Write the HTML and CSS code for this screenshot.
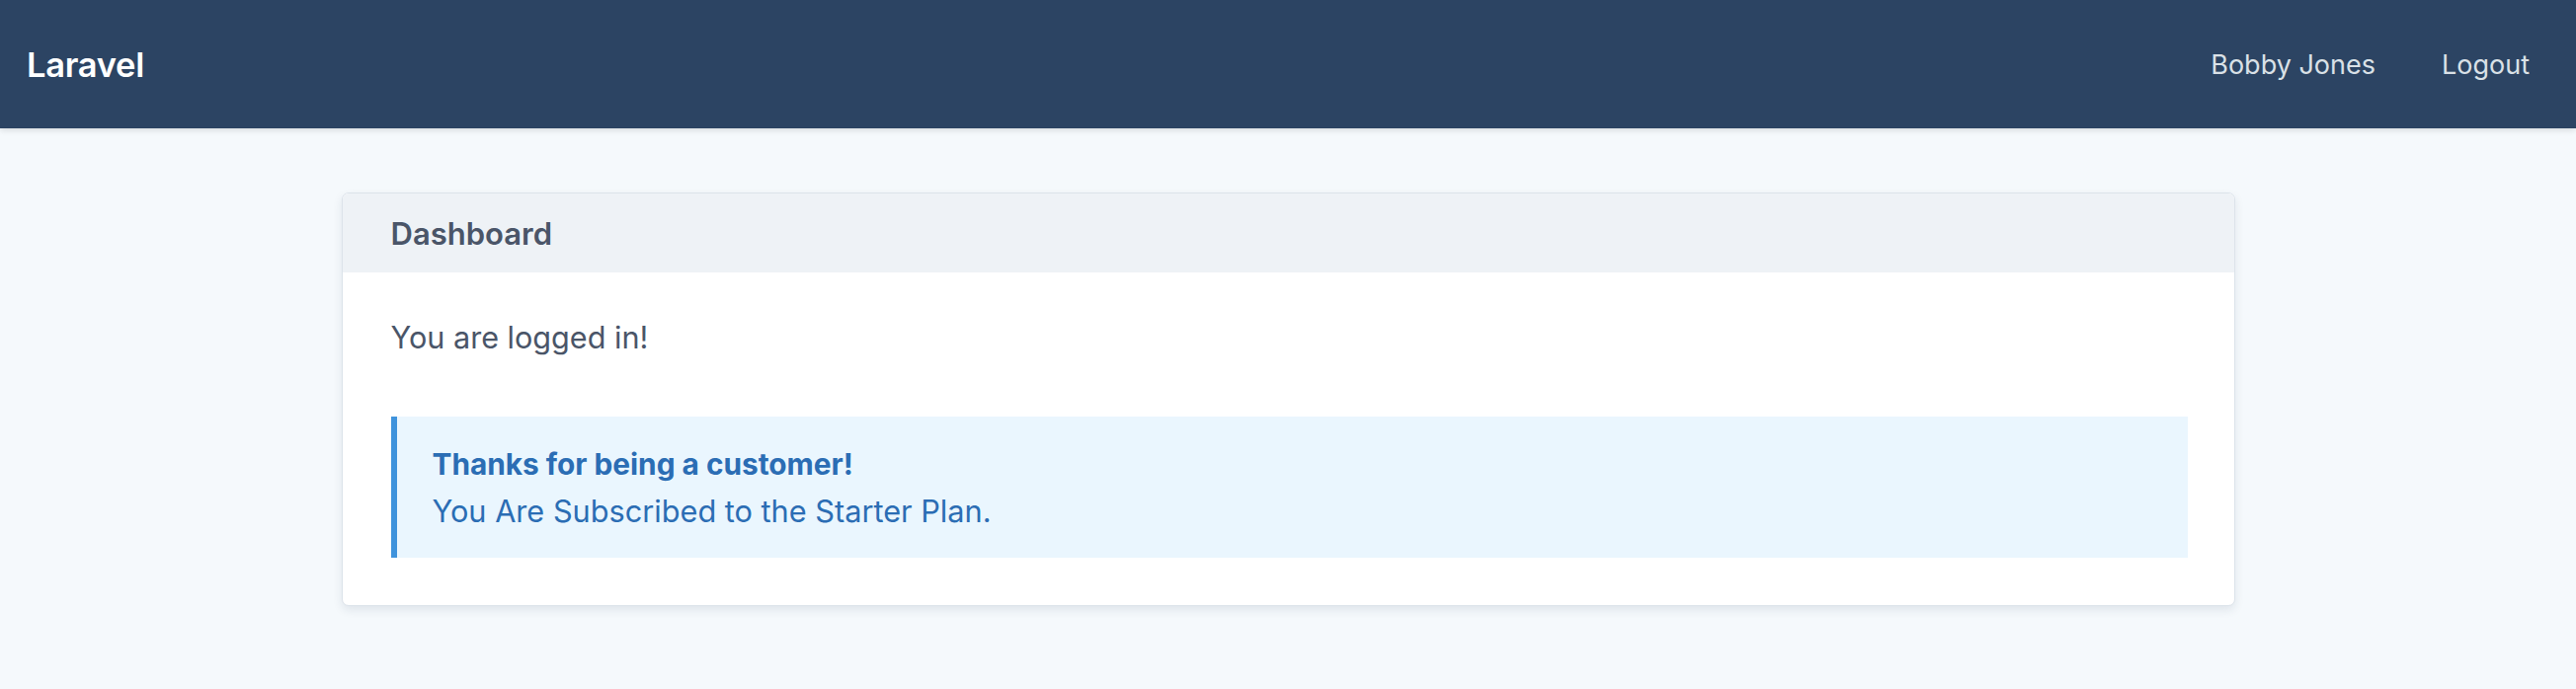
FILE: index.html
```html
<!DOCTYPE html>
<html lang="en">
<head>
<meta charset="utf-8">
<title>Laravel</title>
<link rel="stylesheet" href="styles.css">
</head>
<body>
<nav class="navbar">
  <a class="brand" href="#">Laravel</a>
  <div class="nav-links">
    <a class="nav-link" href="#">Bobby Jones</a>
    <a class="nav-link" href="#">Logout</a>
  </div>
</nav>
<main class="main">
  <section class="card">
    <div class="card-header">Dashboard</div>
    <div class="card-body">
      <p class="status">You are logged in!</p>
      <div class="alert">
        <p class="alert-title">Thanks for being a customer!</p>
        <p class="alert-text">You Are Subscribed to the Starter Plan.</p>
      </div>
    </div>
  </section>
</main>
</body>
</html>
```

FILE: styles.css
```css
* { box-sizing: border-box; }
html, body { margin: 0; padding: 0; }
body {
  background: #f5f9fc;
  font-family: Inter, "Noto Sans", "Liberation Sans", sans-serif;
  color: #4a5568;
  height: 698px;
  overflow: hidden;
}
a { text-decoration: none; }
.navbar {
  height: 130px;
  background: #2c4463;
  display: flex;
  align-items: center;
  justify-content: space-between;
  padding: 0 47px 0 27px;
  box-shadow: 0 2px 6px rgba(0, 0, 0, 0.12);
  position: relative;
}
.brand {
  color: #ffffff;
  font-size: 34.5px;
  font-weight: 600;
  letter-spacing: -0.3px;
}
.nav-links {
  display: flex;
  gap: 67px;
}
.nav-link {
  color: #dae1e7;
  font-size: 27px;
  font-weight: 400;
}
.main {
  padding-top: 65px;
  display: flex;
  justify-content: center;
}
.card {
  width: 1917px;
  background: #ffffff;
  border: 1px solid #dce3ea;
  border-radius: 7px;
  overflow: hidden;
  box-shadow: 0 4px 10px rgba(30, 50, 80, 0.10);
}
.card-header {
  height: 80px;
  background: #eef2f6;
  padding: 0 49px;
  display: flex;
  align-items: center;
  font-size: 31px;
  font-weight: 600;
  color: #4a5568;
}
.card-body {
  padding: 42px 47px 48px 49px;
}
.status {
  margin: 0 0 56px 0;
  font-size: 30.6px;
  line-height: 48px;
  color: #4a5568;
}
.alert {
  background: #eaf6fe;
  border-left: 6px solid #3f93dc;
  padding: 24px 36px 23px 36px;
  color: #2b6db4;
}
.alert p {
  margin: 0;
  line-height: 48px;
}
.alert-title { font-weight: 700; font-size: 29.8px; }
.alert-text { font-weight: 400; font-size: 30.7px; }
```
